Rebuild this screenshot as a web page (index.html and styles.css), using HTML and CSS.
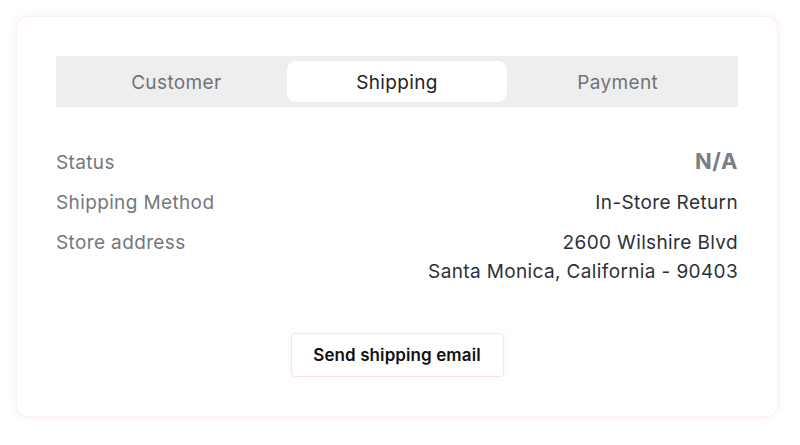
FILE: index.html
```html
<!DOCTYPE html>
<html>
<head>
<meta charset="utf-8">
<link rel="stylesheet" href="styles.css">
</head>
<body>
<div class="card">
  <div class="tabs">
    <div class="tab">Customer</div>
    <div class="tab active">Shipping</div>
    <div class="tab">Payment</div>
  </div>
  <div class="rows">
    <div class="row">
      <div class="label">Status</div>
      <div class="value strong">N/A</div>
    </div>
    <div class="row">
      <div class="label">Shipping Method</div>
      <div class="value">In-Store Return</div>
    </div>
    <div class="row">
      <div class="label">Store address</div>
      <div class="value">2600 Wilshire Blvd<br>Santa Monica, California - 90403</div>
    </div>
  </div>
  <div class="actions">
    <button class="btn">Send shipping email</button>
  </div>
</div>
</body>
</html>
```
FILE: styles.css
```css
html, body {
  margin: 0;
  padding: 0;
  background: #ffffff;
}
body {
  font-family: Inter, "Liberation Sans", sans-serif;
  padding: 17px;
}
.card {
  width: 760px;
  height: 399px;
  box-sizing: border-box;
  padding: 39px 39px 0 39px;
  border-radius: 10px;
  background: #fff;
  box-shadow: 0 0 0 1px #fdf1ef, 0 0 8px rgba(248, 190, 185, 0.35);
}
.tabs {
  display: grid;
  grid-template-columns: 1fr 1fr 1fr;
  background: #eeeeee;
  height: 51px;
  box-sizing: border-box;
  padding: 5px 10px;
}
.tab {
  display: flex;
  align-items: center;
  justify-content: center;
  padding-top: 2px;
  font-size: 19px;
  letter-spacing: 0.37px;
  color: #6f7378;
  border-radius: 8px;
}
.tab.active {
  background: #fff;
  color: #1f2328;
  box-shadow: 0 0 1px rgba(0,0,0,0.08);
}
.rows {
  margin-top: 40px;
  display: flex;
  flex-direction: column;
  gap: 11px;
}
.row {
  display: flex;
  justify-content: space-between;
  align-items: baseline;
  font-size: 19px;
  letter-spacing: 0.37px;
  line-height: 29px;
}
.label {
  color: #74787d;
}
.value {
  color: #2c3138;
  text-align: right;
}
.value.strong {
  font-weight: 700;
  color: #7a7e83;
  font-size: 22px;
  letter-spacing: 0.6px;
}
.actions {
  display: flex;
  justify-content: center;
  margin-top: 47px;
}
.btn {
  font-family: Inter, "Liberation Sans", sans-serif;
  width: 213px;
  height: 44px;
  padding: 0;
  background: #fff;
  border: 1px solid #fbe3e0;
  border-radius: 4px;
  font-size: 17px;
  letter-spacing: 0.1px;
  font-weight: 600;
  color: #111;
  box-shadow: 0 0 8px rgba(240, 200, 200, 0.2);
  cursor: pointer;
}
```
